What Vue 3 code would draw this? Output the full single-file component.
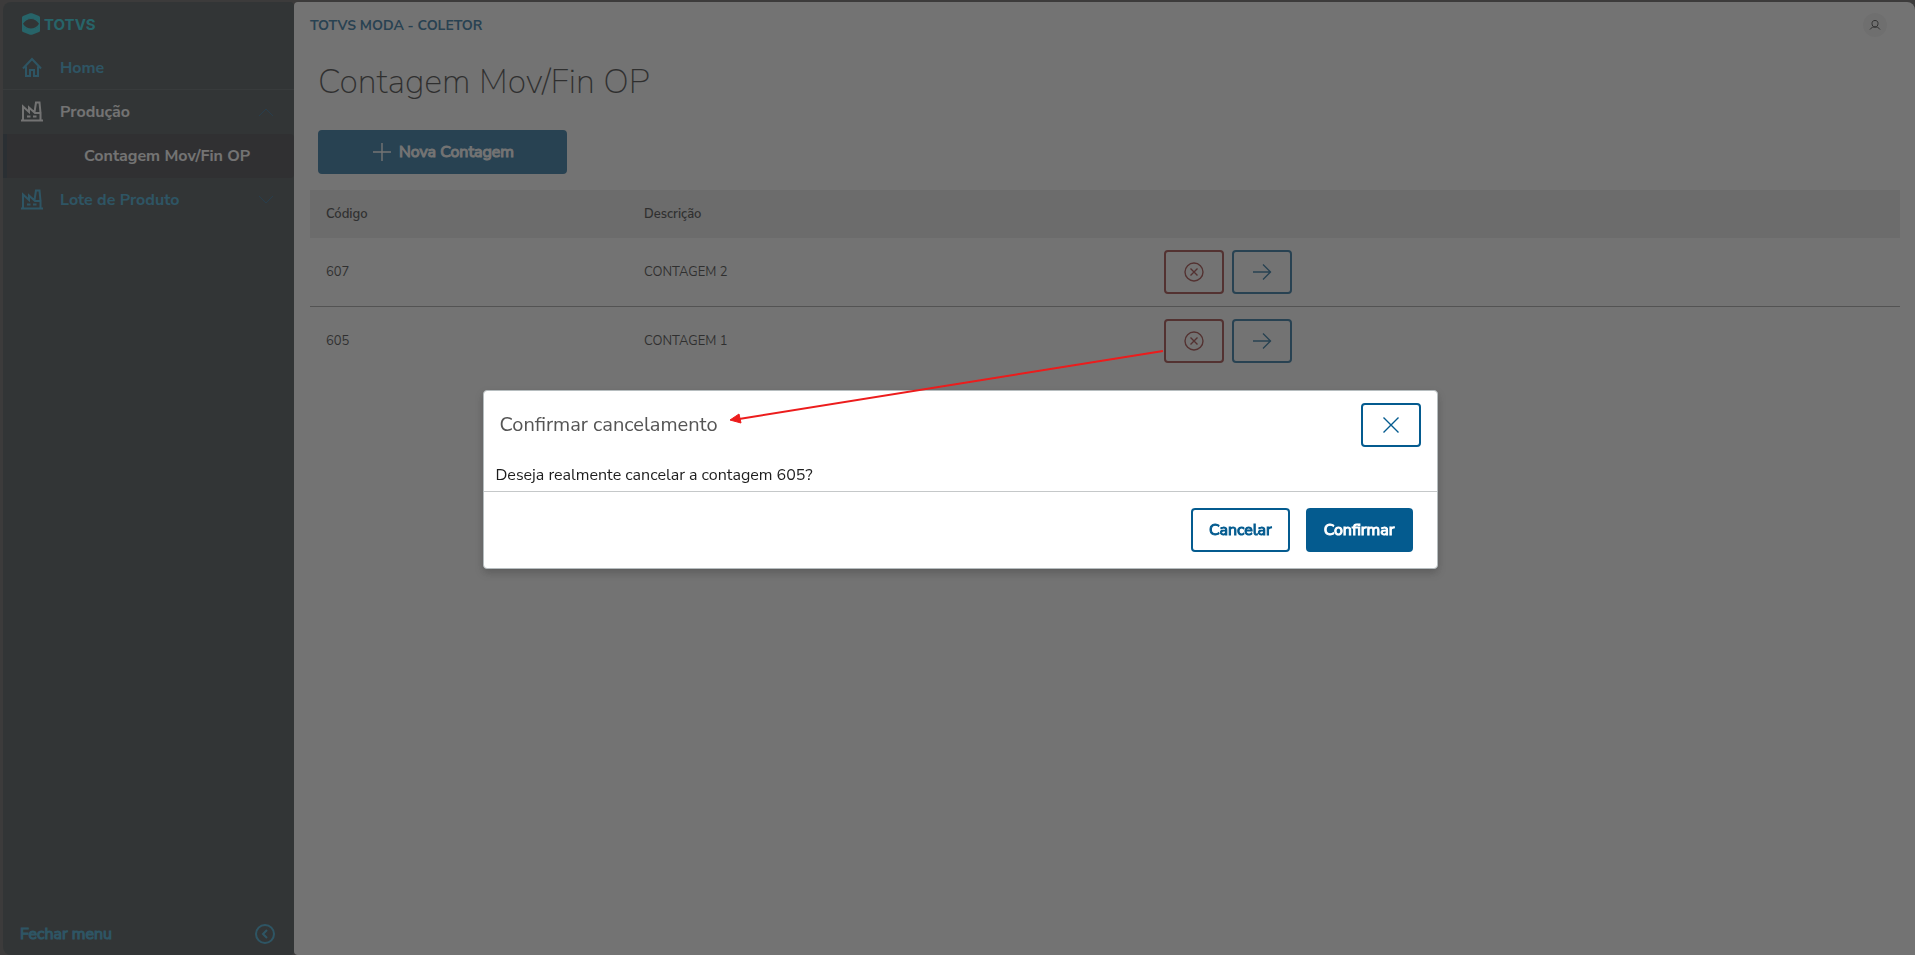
<template>
  <div class="app-shell">
    <aside class="sidebar">
      <div class="logo">
        <svg width="18" height="22" viewBox="0 0 18 22">
          <path d="M0 4.500Q0 3.500 1 3L8 .3Q9 0 10 .3L17 3Q18 3.500 18 4.500V9Q14 5.500 9 5.500T0 9Z" />
          <path d="M0 17.500Q0 18.500 1 19L8 21.700Q9 22 10 21.700L17 19Q18 18.500 18 17.500V12.500Q14 16 9 16T0 12.500Z" />
          <path d="M0 8Q5 5 9 5V6Q4 6 1 10.700Q4 15.500 9 15.500V16.500Q5 16.500 0 13.500ZM18 8Q13 5 9 5V6Q14 6 17 10.700Q14 15.500 9 15.500V16.500Q13 16.500 18 13.500Z" />
        </svg>
        <span>TOTVS</span>
      </div>

      <nav class="menu">
        <a
          v-for="item in menuItems"
          :key="item.label"
          href="#"
          class="menu-item"
          :class="item.kind"
        >
          <svg v-if="item.icon === 'home'" class="menu-icon" viewBox="0 0 22 22">
            <path d="M2 11.500 11 2 20 11.500M5 9.500V19H9V13H13V19H17V9.500" />
          </svg>
          <svg v-if="item.icon === 'factory'" class="menu-icon" viewBox="0 0 22 22">
            <path d="M0 19.500H22M2 19V5.500L8 11V6.500L14 12H19.500V19M13.500 11 15 1.500H18.500L19.500 12M6 15.500H9.500M12 15.500H15.500" />
          </svg>
          <span class="menu-label">{{ item.label }}</span>
          <svg v-if="item.chevron" class="chevron" viewBox="0 0 16 10">
            <path :d="item.chevron === 'up' ? 'M1 9 8 2 15 9' : 'M1 1 8 8 15 1'" />
          </svg>
        </a>
      </nav>

      <button class="close-menu" type="button">
        <span>Fechar menu</span>
        <svg width="20" height="20" viewBox="0 0 20 20">
          <circle cx="10" cy="10" r="9" />
          <path d="M12 6 8 10 12 14" />
        </svg>
      </button>
    </aside>

    <main class="page">
      <header class="topbar">
        <span>TOTVS MODA - COLETOR</span>
        <button class="avatar" type="button" aria-label="Usuário">
          <svg width="12" height="12" viewBox="0 0 12 12">
            <path d="M6 1.500C8 1.500 9 2.500 9 4.500S8 8 6 8 3 6.500 3 4.500 4 1.500 6 1.500ZM1 10.500 3.500 8H8.500L11 10.500" />
          </svg>
        </button>
      </header>

      <h1>Contagem Mov/Fin OP</h1>

      <button class="btn primary new-button" type="button">
        <svg width="18" height="18" viewBox="0 0 18 18">
          <path d="M9 0V18M0 9H18" />
        </svg>
        Nova Contagem
      </button>

      <table>
        <thead>
          <tr>
            <th class="col-code">Código</th>
            <th class="col-description">Descrição</th>
            <th></th>
          </tr>
        </thead>
        <tbody>
          <tr v-for="row in rows" :key="row.code">
            <td>{{ row.code }}</td>
            <td>{{ row.description }}</td>
            <td>
              <div class="row-actions">
                <button class="btn icon-button danger" type="button" aria-label="Cancelar contagem">
                  <svg width="20" height="20" viewBox="0 0 20 20">
                    <circle cx="10" cy="10" r="9" />
                    <path d="M6.500 6.500 13.500 13.500M13.500 6.500 6.500 13.500" />
                  </svg>
                </button>
                <button class="btn icon-button" type="button" aria-label="Abrir contagem">
                  <svg width="20" height="20" viewBox="0 0 20 20">
                    <path d="M1 10H19M11 2.500 18.500 10 11 17.500" />
                  </svg>
                </button>
              </div>
            </td>
          </tr>
        </tbody>
      </table>
    </main>

    <div v-if="modalOpen" class="overlay">
      <section class="modal" role="dialog" aria-labelledby="modal-title">
        <header class="modal-header">
          <h2 id="modal-title">Confirmar cancelamento</h2>
          <button class="btn icon-button" type="button" aria-label="Fechar" @click="modalOpen = false">
            <svg width="20" height="20" viewBox="0 0 20 20">
              <path d="M2.500 2.500 17.500 17.500M17.500 2.500 2.500 17.500" />
            </svg>
          </button>
        </header>
        <p class="modal-body">Deseja realmente cancelar a contagem 605?</p>
        <footer class="modal-footer">
          <button class="btn" type="button" @click="modalOpen = false">Cancelar</button>
          <button class="btn primary" type="button" @click="modalOpen = false">Confirmar</button>
        </footer>

        <svg class="arrow" width="434" height="76" viewBox="0 0 434 76">
          <path class="arrow-line" d="M433 2 9 70" />
          <path class="arrow-head" d="M0 71 9 65 11 74Z" />
        </svg>
      </section>
    </div>
  </div>
</template>

<script setup>
import { ref } from "vue";

const modalOpen = ref(true);

const menuItems = [
  { label: "Home", icon: "home", kind: "home" },
  { label: "Produção", icon: "factory", kind: "open", chevron: "up" },
  { label: "Contagem Mov/Fin OP", kind: "selected" },
  { label: "Lote de Produto", icon: "factory", kind: "", chevron: "down" },
];

const rows = [
  { code: 607, description: "CONTAGEM 2" },
  { code: 605, description: "CONTAGEM 1" },
];
</script>

<style>
body {
  margin: 0;
}
</style>

<style scoped>
* {
  box-sizing: border-box;
}

.app-shell {
  display: flex;
  min-height: 100vh;
  padding: 2px 0 0 3px;
  background: #474343;
  font-family: "Nunito Sans", "Open Sans", sans-serif;
  font-size: 16px;
  color: #1d1d1d;
}

svg {
  flex: none;
  fill: none;
  stroke: currentColor;
  stroke-width: 1;
}

button {
  font: inherit;
  cursor: pointer;
}

.sidebar {
  display: flex;
  flex-direction: column;
  width: 291px;
  flex: none;
  background: #263133;
  border-radius: 8px 4px 4px 8px;
}

.logo {
  display: flex;
  align-items: center;
  gap: 4px;
  height: 44px;
  padding-left: 19px;
  color: #00ccdc;
  font-family: Inter, sans-serif;
  font-size: 15px;
  font-weight: 700;
}

.logo svg {
  fill: currentColor;
  stroke: none;
}

.menu-item {
  display: flex;
  align-items: center;
  height: 44px;
  padding: 0 20px 0 18px;
  color: #199bcd;
  font-weight: 700;
  text-decoration: none;
}

.menu-item.home {
  border-bottom: 1px solid #3a4548;
}

.menu-item.open {
  color: #fff;
}

.menu-item.selected {
  padding-left: 77px;
  border-left: 4px solid #0b1c2b;
  border-radius: 0 4px 4px 0;
  background: #202025;
  color: #fff;
}

.menu-icon {
  width: 22px;
  height: 22px;
  margin-right: 17px;
  stroke-width: 2;
}

.menu-label {
  flex: 1;
}

.chevron {
  width: 16px;
  height: 10px;
  color: #044c78;
}

.close-menu {
  display: flex;
  align-items: center;
  justify-content: space-between;
  height: 42px;
  margin-top: auto;
  padding: 0 19px 0 17px;
  border: 0;
  background: none;
  color: #199bcd;
  -webkit-text-stroke: 1px currentColor;
}

.close-menu svg {
  stroke-width: 2;
}

.page {
  flex: 1;
  padding: 0 15px 0 16px;
  background: #fff;
  border-radius: 4px 8px 0 4px;
}

.topbar {
  display: flex;
  align-items: center;
  justify-content: space-between;
  height: 46px;
  padding-right: 13px;
  color: #045b8f;
  font-size: 14px;
  font-weight: 700;
}

.avatar {
  display: flex;
  align-items: center;
  justify-content: center;
  width: 24px;
  height: 24px;
  padding: 0;
  border: 0;
  border-radius: 50%;
  background: #f2f2f2;
  color: #1d1d1d;
}

h1 {
  margin: 10px 0 24px 8px;
  font-size: 34px;
  font-weight: 200;
  line-height: 48px;
}

.btn {
  display: inline-flex;
  align-items: center;
  justify-content: center;
  height: 44px;
  padding: 0 16px;
  border: 2px solid #045b8f;
  border-radius: 4px;
  background: none;
  color: #045b8f;
  -webkit-text-stroke: 1px currentColor;
}

.btn svg {
  stroke-width: 1.4;
}

.btn.primary {
  background: #045b8f;
  color: #fff;
}

.btn.danger {
  border-color: #942522;
  color: #942522;
}

.new-button {
  gap: 8px;
  width: 249px;
  margin-left: 8px;
  padding: 0 16px 0 18px;
}

.icon-button {
  width: 60px;
  padding: 0;
}

table {
  width: 100%;
  margin-top: 16px;
  border-collapse: separate;
  border-spacing: 0;
  table-layout: fixed;
  font-size: 13px;
}

th {
  height: 48px;
  padding: 0 16px;
  background: #e6e6e6;
  text-align: left;
  font-weight: 600;
}

.col-code {
  width: 20%;
}

.col-description {
  width: 33%;
}

td {
  height: 68px;
  padding: 0 16px;
}

td:last-child {
  padding: 0 11px;
}

tbody tr + tr td {
  height: 69px;
  border-top: 1px solid #959595;
}

.row-actions {
  display: flex;
  gap: 8px;
}

.overlay {
  position: fixed;
  inset: 0;
  display: flex;
  align-items: center;
  justify-content: center;
  padding: 4px 0 0 5px;
  background: rgba(55, 55, 55, 0.7);
}

.modal {
  position: relative;
  width: 50%;
  border: 1px solid #b6bdbf;
  border-radius: 4px;
  background: #fff;
  box-shadow: 0 4px 8px rgba(0, 0, 0, 0.2);
}

.modal-header {
  display: flex;
  align-items: center;
  justify-content: space-between;
  padding: 12px 16px;
}

h2 {
  margin: 0;
  color: #555;
  font-size: 20px;
  font-weight: 400;
  line-height: 24px;
}

.modal-body {
  margin: 0;
  padding: 4px 12px;
  line-height: 24px;
}

.modal-footer {
  display: flex;
  justify-content: flex-end;
  gap: 16px;
  padding: 16px 24px;
  border-top: 1px solid #c5c8c9;
}

/* callout from the cancel button of the row to the dialog title */
.arrow {
  position: absolute;
  top: -42px;
  left: 246px;
  pointer-events: none;
}

.arrow-line {
  stroke: #ec1c1c;
  stroke-width: 2;
}

.arrow-head {
  fill: #ec1c1c;
  stroke: #ec1c1c;
}
</style>
